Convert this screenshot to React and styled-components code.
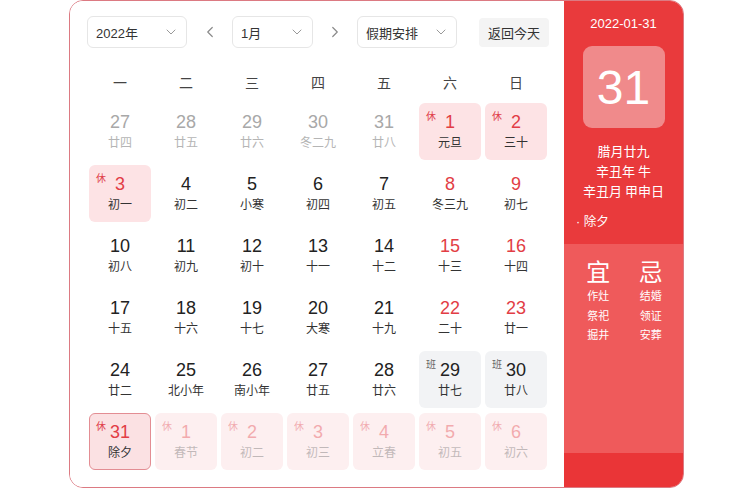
import React from "react";
import styled, { createGlobalStyle } from "styled-components";
import { ChevronDown, ChevronLeft, ChevronRight } from "lucide-react";

const Global = createGlobalStyle`
  html, body { margin: 0; padding: 0; background: #fff; }
  body { font-family: "Liberation Sans", "Noto Sans CJK SC", sans-serif; }
  * { box-sizing: border-box; }
`;

const Card = styled.div`
  margin-left: 69px;
  width: 615px;
  height: 488px;
  border: 1.5px solid #dc7a82;
  border-radius: 14px;
  overflow: hidden;
  display: flex;
`;

const Main = styled.div`
  width: 494px;
  padding: 15px 0 0 17px;
  display: flex;
  flex-direction: column;
  background: #fff;
`;

const Toolbar = styled.div`
  display: flex;
  align-items: center;
  height: 32px;
`;

const Select = styled.div`
  width: ${(p) => p.$w}px;
  height: 32px;
  border: 1px solid #e6e6e6;
  border-radius: 6px;
  display: flex;
  align-items: center;
  justify-content: space-between;
  padding: 0 7px 0 8px;
  font-size: 13px;
  color: #333;
`;

const Arrow = styled.div`
  width: ${(p) => p.$w}px;
  display: flex;
  justify-content: center;
  color: #8a8a8a;
`;

const TodayBtn = styled.div`
  margin-left: 22px;
  width: 70px;
  height: 29px;
  background: #f4f4f4;
  border-radius: 4px;
  display: flex;
  align-items: center;
  justify-content: center;
  font-size: 13px;
  color: #333;
`;

const Weekdays = styled.div`
  margin-top: 22px;
  display: grid;
  grid-template-columns: repeat(7, 62px);
  column-gap: 4px;
  padding-left: 2px;
  height: 24px;
  align-items: center;
`;

const Weekday = styled.div`
  text-align: center;
  font-size: 14px;
  color: #444;
`;

const Grid = styled.div`
  margin-top: 9px;
  display: grid;
  grid-template-columns: repeat(7, 62px);
  grid-auto-rows: 57px;
  column-gap: 4px;
  row-gap: 5px;
  padding-left: 2px;
`;

const bgMap = {
  rest: "#fde3e5",
  work: "#f2f3f5",
  today: "#fbe1e3",
  faded: "#fdeff0",
  none: "transparent",
};

const Cell = styled.div`
  position: relative;
  border-radius: 6px;
  background: ${(p) => bgMap[p.$bg]};
  border: ${(p) => (p.$bg === "today" ? "1px solid #e38d93" : "1px solid transparent")};
  display: flex;
  flex-direction: column;
  align-items: center;
  padding-top: 7px;
`;

const Num = styled.div`
  font-size: 18px;
  line-height: 22px;
  color: ${(p) => p.$c};
  opacity: ${(p) => (p.$fade ? 0.38 : 1)};
`;

const Lunar = styled.div`
  margin-top: 2px;
  font-size: 12px;
  line-height: 16px;
  color: ${(p) => p.$c};
  opacity: ${(p) => (p.$fade ? 0.35 : 1)};
`;

const Tag = styled.span`
  position: absolute;
  left: 6px;
  top: 4px;
  font-size: 10px;
  color: ${(p) => (p.$work ? "#666" : "#e0424b")};
  opacity: ${(p) => (p.$fade ? 0.38 : 1)};
`;

const Panel = styled.div`
  flex: 1;
  display: flex;
  flex-direction: column;
  color: #fff;
`;

const PanelTop = styled.div`
  height: 243px;
  background: #e93a3c;
  display: flex;
  flex-direction: column;
  align-items: center;
  padding-top: 14px;
`;

const DateText = styled.div`
  font-size: 13px;
  line-height: 18px;
`;

const DayBox = styled.div`
  margin-top: 13px;
  width: 82px;
  height: 82px;
  border-radius: 9px;
  background: #f08a8b;
  display: flex;
  align-items: center;
  justify-content: center;
  font-size: 48px;
  font-weight: 400;
`;

const InfoLines = styled.div`
  margin-top: 13px;
  font-size: 13px;
  line-height: 20px;
  text-align: center;
  font-family: "Noto Sans CJK SC", sans-serif;
`;

const Festival = styled.div`
  align-self: flex-start;
  margin: 10px 0 0 12px;
  font-size: 12.5px;
  font-family: "Liberation Sans", "Noto Sans CJK SC", sans-serif;
`;

const PanelMid = styled.div`
  height: 209px;
  background: #ef5a5b;
  display: grid;
  grid-template-columns: 1fr 1fr;
  padding: 11px 6px 0 8px;
`;

const Col = styled.div`
  display: flex;
  flex-direction: column;
  align-items: center;
`;

const Big = styled.div`
  font-size: 24px;
  line-height: 31px;
  font-family: "Noto Sans CJK SC", sans-serif;
`;

const Item = styled.div`
  font-size: 11px;
  line-height: 19.5px;
  font-family: "Noto Sans CJK SC", sans-serif;
`;

const PanelBottom = styled.div`
  flex: 1;
  background: #ea3537;
`;

const weekdays = ["一", "二", "三", "四", "五", "六", "日"];

const RED = "#e23d45";
const BLACK = "#222";
const GRAY = "#a8a8a8";

const days = [
  ["27", "廿四", "prev"], ["28", "廿五", "prev"], ["29", "廿六", "prev"], ["30", "冬二九", "prev"], ["31", "廿八", "prev"],
  ["1", "元旦", "rest"], ["2", "三十", "rest"],
  ["3", "初一", "rest"], ["4", "初二"], ["5", "小寒"], ["6", "初四"], ["7", "初五"], ["8", "冬三九", "we"], ["9", "初七", "we"],
  ["10", "初八"], ["11", "初九"], ["12", "初十"], ["13", "十一"], ["14", "十二"], ["15", "十三", "we"], ["16", "十四", "we"],
  ["17", "十五"], ["18", "十六"], ["19", "十七"], ["20", "大寒"], ["21", "十九"], ["22", "二十", "we"], ["23", "廿一", "we"],
  ["24", "廿二"], ["25", "北小年"], ["26", "南小年"], ["27", "廿五"], ["28", "廿六"], ["29", "廿七", "work"], ["30", "廿八", "work"],
  ["31", "除夕", "today"], ["1", "春节", "next"], ["2", "初二", "next"], ["3", "初三", "next"], ["4", "立春", "next"], ["5", "初五", "next"], ["6", "初六", "next"],
];

function Day({ n, l, k }) {
  let bg = "none";
  let nc = BLACK;
  let lc = "#333";
  let tag = null;
  let fade = false;
  if (k === "prev") { nc = GRAY; lc = "#b5b5b5"; }
  if (k === "we") { nc = RED; }
  if (k === "rest") { bg = "rest"; nc = RED; tag = "休"; }
  if (k === "today") { bg = "today"; nc = RED; tag = "休"; }
  if (k === "next") { bg = "faded"; nc = RED; lc = "#555"; tag = "休"; fade = true; }
  if (k === "work") { bg = "work"; tag = "班"; }
  return (
    <Cell $bg={bg}>
      {tag && <Tag $work={k === "work"} $fade={fade}>{tag}</Tag>}
      <Num $c={nc} $fade={fade}>{n}</Num>
      <Lunar $c={lc} $fade={fade}>{l}</Lunar>
    </Cell>
  );
}

export default function App() {
  return (
    <>
      <Global />
      <Card>
        <Main>
          <Toolbar>
            <Select $w={100}>2022年<ChevronDown size={16} strokeWidth={1.5} color="#999" /></Select>
            <Arrow $w={45}><ChevronLeft size={18} strokeWidth={1.6} /></Arrow>
            <Select $w={81}>1月<ChevronDown size={16} strokeWidth={1.5} color="#999" /></Select>
            <Arrow $w={44}><ChevronRight size={18} strokeWidth={1.6} /></Arrow>
            <Select $w={100}>假期安排<ChevronDown size={16} strokeWidth={1.5} color="#999" /></Select>
            <TodayBtn>返回今天</TodayBtn>
          </Toolbar>
          <Weekdays>
            {weekdays.map((w) => <Weekday key={w}>{w}</Weekday>)}
          </Weekdays>
          <Grid>
            {days.map(([n, l, k], i) => <Day key={i} n={n} l={l} k={k} />)}
          </Grid>
        </Main>
        <Panel>
          <PanelTop>
            <DateText>2022-01-31</DateText>
            <DayBox>31</DayBox>
            <InfoLines>
              <div>腊月廿九</div>
              <div>辛丑年 牛</div>
              <div>辛丑月 甲申日</div>
            </InfoLines>
            <Festival>· 除夕</Festival>
          </PanelTop>
          <PanelMid>
            <Col>
              <Big>宜</Big>
              <Item>作灶</Item>
              <Item>祭祀</Item>
              <Item>掘井</Item>
            </Col>
            <Col>
              <Big>忌</Big>
              <Item>结婚</Item>
              <Item>领证</Item>
              <Item>安葬</Item>
            </Col>
          </PanelMid>
          <PanelBottom />
        </Panel>
      </Card>
    </>
  );
}
